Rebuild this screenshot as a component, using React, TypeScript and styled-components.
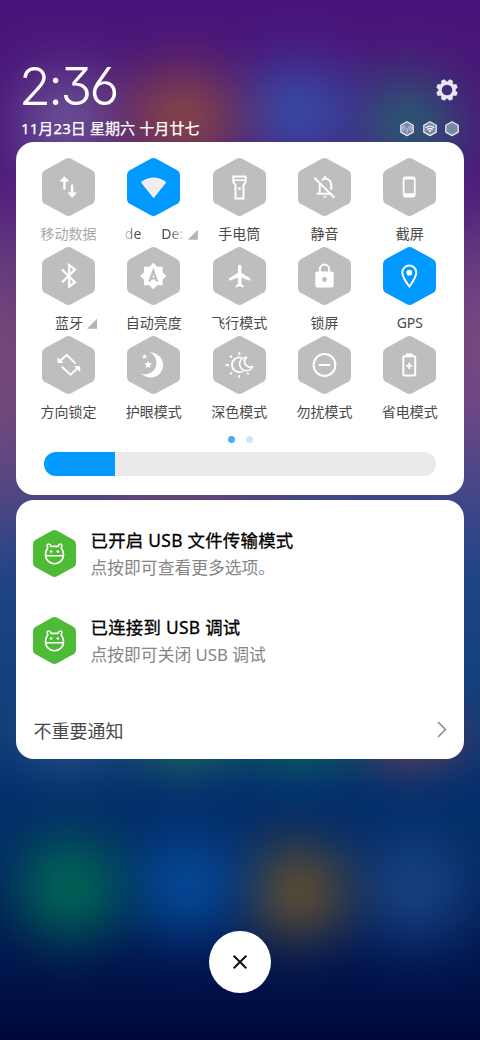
import React from 'react';
import styled, { createGlobalStyle, css } from 'styled-components';

const GlobalStyle = createGlobalStyle`
  * { box-sizing: border-box; }
  body {
    margin: 0;
    background: #000535;
    font-family: "Noto Sans", "Noto Sans CJK SC", sans-serif;
  }
`;

const glow = (shape: string, x: number, y: number, rgb: string, alpha: number) =>
  `radial-gradient(ellipse ${shape} at ${x}px ${y}px, ` +
  [[1, 0], [0.92, 15], [0.72, 30], [0.47, 45], [0.25, 60], [0.1, 75], [0.03, 88], [0, 100]]
    .map(([k, stop]) => `rgba(${rgb}, ${(alpha * k).toFixed(3)}) ${stop}%`)
    .join(', ') +
  ')';

const wallpaper = [
  glow('115px 105px', 182, 118, '138, 72, 66', 0.85),
  glow('120px 105px', 298, 112, '52, 78, 168', 0.85),
  glow('110px 105px', 408, 124, '40, 92, 112', 0.85),
  glow('110px 110px', 68, 122, '110, 86, 152', 0.8),
  glow('105px 105px', 70, 888, '0, 106, 84', 0.85),
  glow('115px 105px', 187, 886, '5, 76, 158', 0.8),
  glow('105px 100px', 298, 892, '92, 76, 50', 0.9),
  glow('115px 110px', 414, 888, '28, 70, 138', 0.75),
  glow('110px 85px', 68, 735, '40, 80, 130', 0.8),
  glow('110px 75px', 185, 738, '30, 96, 92', 0.9),
  glow('110px 75px', 300, 738, '8, 92, 92', 0.9),
  glow('110px 75px', 412, 738, '85, 60, 90', 0.9),
  glow('190px 70px', 175, 497, '112, 68, 112', 0.7),
  glow('90px 230px', 0, 370, '124, 74, 116', 0.8),
  glow('90px 190px', 480, 350, '126, 74, 126', 0.8),
  `linear-gradient(#49157a 0, #4a1678 90px, #4c187a 170px, #5a3280 270px, #54448a 400px, #424688 490px,
    #1f4485 580px, #14407e 680px, #04306e 780px, #022a62 860px, #011850 950px, #00083c 1040px)`,
].join(', ');

const Screen = styled.main`
  display: flex;
  flex-direction: column;
  width: 480px;
  height: 1040px;
  padding: 0 16px;
  overflow: hidden;
  background: ${wallpaper};
`;

const Header = styled.header`
  display: flex;
  justify-content: space-between;
  height: 142px;
  padding: 62px 4px 0 5px;
  color: #fff;
`;

const HeaderColumn = styled.div<{ $end?: boolean }>`
  display: flex;
  flex-direction: column;
  align-items: ${p => (p.$end ? 'flex-end' : 'flex-start')};
  padding-top: ${p => (p.$end ? 17 : 0)}px;
`;

const Clock = styled.time`
  height: 47px;
  margin-left: -2px;
  padding-top: 1px;
  font: 300 52px/47px Inter, sans-serif;
  font-feature-settings: "cv09", "ss01", "cv03";
  letter-spacing: -2.6px;
`;

const DateLine = styled.div`
  margin-top: 8px;
  font-size: 15px;
  line-height: 22px;
  letter-spacing: 0.1px;
  white-space: nowrap;
  -webkit-text-stroke: 0.25px #fff;
`;

const StatusIcons = styled.div`
  display: flex;
  gap: 8.7px;
  margin: 19.5px 0.6px 0 0;
`;

const Card = styled.section<{ $height: number }>`
  flex: none;
  height: ${p => p.$height}px;
  margin-bottom: 5px;
  border-radius: 18px;
  background: #fff;
`;

const TileGrid = styled.div`
  display: grid;
  grid-template-columns: repeat(5, 85.35px);
  grid-auto-rows: 89px;
  padding: 15.7px 0 0 9.8px;
`;

const TileBox = styled.div`
  display: flex;
  flex-direction: column;
  align-items: center;
`;

const TileLabel = styled.div<{ $muted?: boolean; $more?: boolean }>`
  display: flex;
  align-items: center;
  gap: 4px;
  margin-top: 8.6px;
  height: 20px;
  font-size: 14px;
  line-height: 20px;
  white-space: nowrap;
  color: ${p => (p.$muted ? '#a9a9a9' : '#4a4a4a')};
  ${p => p.$more && css`padding-left: 15px;`}
`;

const Marquee = styled.span`
  display: flex;
  gap: 20px;
  width: 59px;
  overflow: hidden;
  mask-image: linear-gradient(90deg, rgba(0, 0, 0, 0.25), #000 12px, #000 44px, transparent 62px);
`;

const MoreMark = styled.i`
  width: 10px;
  height: 10px;
  margin-top: 1px;
  background: #b4b4b4;
  clip-path: polygon(100% 0, 100% 100%, 0 100%);
`;

const Pager = styled.div`
  display: flex;
  justify-content: center;
  gap: 11px;
  margin-top: 11px;
`;

const PageDot = styled.span<{ $active?: boolean }>`
  width: 7px;
  height: 7px;
  border-radius: 50%;
  background: ${p => (p.$active ? '#40b0fa' : '#c8e9fd')};
`;

const Slider = styled.div`
  height: 24px;
  margin: 9.3px 28px 0;
  border-radius: 12px;
  background: #eaeaea;
  overflow: hidden;
`;

const SliderFill = styled.div`
  width: 70.6px;
  height: 100%;
  background: #0099ff;
`;

const NotificationList = styled.div`
  display: flex;
  flex-direction: column;
  height: 205px;
  padding: 27px 17px 0;
`;

const Notification = styled.article`
  display: flex;
  gap: 14.5px;
  height: 87.2px;
  padding-top: 3px;
`;

const NotificationText = styled.div`
  display: flex;
  flex-direction: column;
  white-space: nowrap;
  margin-top: -3px;
`;

const Title = styled.strong`
  font-size: 17.4px;
  font-weight: 400;
  line-height: 27px;
  letter-spacing: 0.28px;
  color: #000;
  -webkit-text-stroke: 0.3px #000;
`;

const Subtitle = styled.span`
  font-size: 16.8px;
  line-height: 27px;
  color: #858585;
`;

const FooterRow = styled.div`
  display: flex;
  justify-content: space-between;
  align-items: center;
  height: 50px;
  padding: 0 17px 0 17.5px;
  font-size: 18px;
  color: #484848;
`;

const CloseButton = styled.button`
  display: grid;
  place-items: center;
  align-self: center;
  flex: none;
  width: 62px;
  height: 62px;
  margin-top: 167px;
  padding: 0;
  border: 0;
  border-radius: 50%;
  background: #fff;
`;

const Icon = styled.svg`
  display: block;
  flex: none;
  overflow: visible;
`;

const GearIcon = styled(Icon)`
  margin-right: 2.5px;
`;

const HEX =
  'M23.3 .9Q26.5 -.8 29.7 .9L49.8 11.9Q53 13.7 53 17.3V40.7Q53 44.3 49.8 46.1L29.7 57.1Q26.5 58.8 23.3 57.1L3.2 46.1Q0 44.3 0 40.7V17.3Q0 13.7 3.2 11.9Z';

const star = (cx: number, cy: number, outer: number, inner: number, points: number) =>
  Array.from({ length: points * 2 }, (_, i) => {
    const r = i % 2 ? inner : outer;
    const a = (i * Math.PI) / points - Math.PI / 2;
    return `${(cx + r * Math.cos(a)).toFixed(2)},${(cy + r * Math.sin(a)).toFixed(2)}`;
  }).join(' ');

const line = { fill: 'none', stroke: '#fff', strokeWidth: 2 } as const;

const glyphs: Record<string, React.ReactNode> = {
  data: (
    <>
      <path d="M22.4 21v10.4M30.1 26.4v10.6" {...line} strokeWidth={2.4} />
      <path d="M22.4 18.2l5 5.2h-10zM30.1 39.7l-5-5.2h10z" fill="#fff" />
    </>
  ),
  wifi: <path d="M14.6 23.6Q26.5 15.6 38.6 23.6Q39.3 24.2 38.8 24.9L27.2 39.4Q26.6 40.2 26 39.4L14.4 24.9Q13.9 24.2 14.6 23.6Z" fill="#eee" />,
  torch: (
    <>
      <path d="M20.3 18.5h12.4v5.2l-2.2 3.6v13.2h-8V27.3l-2.2-3.6z" {...line} />
      <path d="M20.3 22.2h12.4" {...line} strokeWidth={1.6} />
      <circle cx="26.5" cy="30.5" r="1.5" fill="#fff" />
    </>
  ),
  mute: (
    <>
      <path d="M18.7 35.8h14.5M21.7 35.5v-9.8M23.8 22.2c1-.9 2.1-1.4 3.2-1.4c3.6 0 6.2 2.6 6.2 6.3v4.6" {...line} />
      <path d="M27 18.3v3" {...line} strokeWidth={2.6} />
      <path d="M25 38.2h4q-.5 1.6-2 1.6t-2-1.6z" fill="#fff" />
      <path d="M16.3 19.8l20.2 20" {...line} />
    </>
  ),
  phone: (
    <>
      <rect x="19.8" y="18.6" width="12.8" height="20.8" rx="2.4" fill="#fff" />
      <path d="M21.5 21.5h9.4v13.8h-9.4z" fill="#bebebe" />
    </>
  ),
  bluetooth: <path d="M20 22.5L33 35.2L27.2 39.6V18L33 22.6L20 35.4" {...line} strokeWidth={2.2} />,
  auto: (
    <>
      <polygon points={star(26.3, 29, 13.2, 10, 8)} fill="#fff" />
      <path d="M22.5 34.6l3.8-10.4l3.8 10.4M23.9 31.4h4.800" fill="none" stroke="#bebebe" strokeWidth="2.300" />
    </>
  ),
  plane: (
    <path transform="translate(12.8 15.6) scale(1.13)" d="M21.8 16v-2l-8-5V3.5c0-.83-.67-1.5-1.5-1.5s-1.5.67-1.5 1.5V9l-8 5v2l8-2.5V19l-2 1.5V22l3.5-1 3.5 1v-1.5l-2-1.5v-5.5z" fill="#fff" />
  ),
  lock: (
    <>
      <path d="M21.9 25v-2.8a4.6 4.6 0 0 1 9.2 0v2.8" {...line} />
      <rect x="17.3" y="24.4" width="18.4" height="16" rx="1.8" fill="#fff" />
      <circle cx="26.5" cy="32.5" r="2.4" fill="#bebebe" />
    </>
  ),
  pin: (
    <>
      <path d="M26.3 39.5C22.3 34.3 19.3 29.6 19.3 25.6a7 7 0 0 1 14 0C33.3 29.6 30.3 34.3 26.3 39.5Z" {...line} />
      <circle cx="26.3" cy="25.7" r="2.9" fill="#fff" />
    </>
  ),
  rotate: (
    <>
      <path d="M18 25L24.7 18.9L33.6 27.6M19.8 30.8L28.5 38.7L36 31.8" {...line} />
      <path d="M15.6 21.2v5.9h6zM38.200 36v-6h-6.200z" fill="#fff" />
    </>
  ),
  night: (
    <>
      <path d="M22.5 16.6A12.5 12.5 0 1 1 14.2 37.3A11 11 0 1 0 22.5 16.6Z" fill="#fff" />
      <polygon points={star(21.2, 28.8, 4, 1.9, 5)} fill="#fff" />
      <polygon points={star(17.6, 20.5, 2.8, 1.3, 5)} fill="#fff" />
    </>
  ),
  dark: (
    <>
      <path d="M28.6 21.9A7.3 7.3 0 1 0 29.8 35.2" {...line} strokeWidth={1.8} />
      <path d="M26.3 16v3M26.3 39v3M12.7 29h3.2M17 19.7l2 2M17 38.3l2-2M35.7 38.3l-1.5-1.5" {...line} strokeWidth={1.8} />
      <path d="M33.5 21.3A6.7 6.7 0 1 0 39.5 30.6A5.6 5.6 0 0 1 33.5 21.3Z" {...line} strokeWidth={1.7} strokeLinejoin="round" />
    </>
  ),
  dnd: (
    <>
      <circle cx="26.5" cy="29" r="10.9" {...line} />
      <path d="M20.8 29h11.4" {...line} />
    </>
  ),
  battery: (
    <>
      <rect x="20.3" y="20.2" width="11.9" height="19.3" rx="1" {...line} />
      <path d="M23 17.4h6.5v3h-6.5z" fill="#fff" />
      <path d="M26.25 26.7v6.2M23.15 29.8h6.2" {...line} strokeWidth={1.8} />
    </>
  ),
};

interface TileSpec {
  icon: string;
  label: string;
  active?: boolean;
  muted?: boolean;
  more?: boolean;
  scrolling?: string[];
}

const tiles: TileSpec[] = [
  { icon: 'data', label: '移动数据', muted: true },
  { icon: 'wifi', label: '', active: true, more: true, scrolling: ['de', 'De:'] },
  { icon: 'torch', label: '手电筒' },
  { icon: 'mute', label: '静音' },
  { icon: 'phone', label: '截屏' },
  { icon: 'bluetooth', label: '蓝牙', more: true },
  { icon: 'auto', label: '自动亮度' },
  { icon: 'plane', label: '飞行模式' },
  { icon: 'lock', label: '锁屏' },
  { icon: 'pin', label: 'GPS', active: true },
  { icon: 'rotate', label: '方向锁定' },
  { icon: 'night', label: '护眼模式' },
  { icon: 'dark', label: '深色模式' },
  { icon: 'dnd', label: '勿扰模式' },
  { icon: 'battery', label: '省电模式' },
];

const Tile = ({ icon, label, active, muted, more, scrolling }: TileSpec) => (
  <TileBox>
    <Icon width="53" height="58" viewBox="0 0 53 58">
      <path d={HEX} fill={active ? '#0099ff' : '#bebebe'} />
      {glyphs[icon]}
    </Icon>
    <TileLabel $muted={muted} $more={more}>
      {scrolling ? <Marquee>{scrolling.map(t => <span key={t}>{t}</span>)}</Marquee> : label}
      {more && <MoreMark />}
    </TileLabel>
  </TileBox>
);

const StatusHex = ({ children }: { children: React.ReactNode }) => (
  <Icon width="14" height="15.4" viewBox="0 0 14 15.4">
    <path d="M7 .8L13.2 4.2V11.2L7 14.6L.8 11.2V4.2Z" fill="#7d86ab" stroke="#e9e9f0" strokeWidth="1.3" strokeLinejoin="round" />
    {children}
  </Icon>
);

const DebugIcon = () => (
  <Icon width="43" height="47" viewBox="0 0 53 58">
    <path d={HEX} fill="#4dbb35" />
    <g fill="none" stroke="#fff" strokeWidth="2" strokeLinejoin="round" strokeLinecap="round">
      <path d="M18.300 21.800C16.800 19.800 17.200 17.200 19.200 17.200C21.200 17.200 21.700 18.600 22.200 20.200H30.800C31.300 18.600 31.800 17.200 33.800 17.200C35.800 17.200 36.200 19.800 34.700 21.800Q37.600 25.300 37.600 30.700A11.100 11 0 0 1 15.400 30.700Q15.400 25.300 18.300 21.800Z" />
      <path d="M15.600 31.800h21.800" />
    </g>
    <circle cx="22.300" cy="26.600" r="1.600" fill="#fff" />
    <circle cx="30.700" cy="26.600" r="1.600" fill="#fff" />
  </Icon>
);

const gearTeeth = Array.from({ length: 8 }, (_, i) => i * 45 + 22.5);

const notifications = [
  { title: '已开启 USB 文件传输模式', detail: '点按即可查看更多选项。' },
  { title: '已连接到 USB 调试', detail: '点按即可关闭 USB 调试' },
];

export default function App() {
  return (
    <>
      <GlobalStyle />
      <Screen>
        <Header>
          <HeaderColumn>
            <Clock>2:36</Clock>
            <DateLine>11月23日 星期六 十月廿七</DateLine>
          </HeaderColumn>
          <HeaderColumn $end>
            <GearIcon width="22" height="22" viewBox="-11 -11 22 22">
              <circle r="7" fill="none" stroke="#eae6f2" strokeWidth="3.4" />
              {gearTeeth.map(a => (
                <path key={a} d="M-2.7 -8L-1.9 -10.8H1.9L2.7 -8Z" fill="#eae6f2" transform={`rotate(${a})`} />
              ))}
            </GearIcon>
            <StatusIcons>
              <StatusHex>
                <path d="M7 7v5M5.3 8.7a2.3 2.3 0 0 1 0-3.2M8.7 8.7a2.3 2.3 0 0 0 0-3.2M3.7 10a4 4 0 0 1 0-5.5M10.3 10a4 4 0 0 0 0-5.5" fill="none" stroke="#dfe3ee" strokeWidth=".8" />
              </StatusHex>
              <StatusHex>
                <path d="M2.8 6.7Q7 3.3 11.2 6.7M4.3 8.5Q7 6.3 9.7 8.5" fill="none" stroke="#fff" strokeWidth="1.2" />
                <path d="M5.4 9.5Q7 8.3 8.6 9.5L7 11.3Z" fill="#fff" />
              </StatusHex>
              <StatusHex>
                <path d="M7.6 3.8L5 8h1.7L6.3 11.7L9 7.3H7.3Z" fill="#3d9f7c" />
              </StatusHex>
            </StatusIcons>
          </HeaderColumn>
        </Header>

        <Card $height={352.5}>
          <TileGrid>{tiles.map(t => <Tile key={t.icon} {...t} />)}</TileGrid>
          <Pager>
            <PageDot $active />
            <PageDot />
          </Pager>
          <Slider>
            <SliderFill />
          </Slider>
        </Card>

        <Card $height={259.5}>
          <NotificationList>
            {notifications.map(n => (
              <Notification key={n.title}>
                <DebugIcon />
                <NotificationText>
                  <Title>{n.title}</Title>
                  <Subtitle>{n.detail}</Subtitle>
                </NotificationText>
              </Notification>
            ))}
          </NotificationList>
          <FooterRow>
            <span>不重要通知</span>
            <Icon width="10" height="17" viewBox="0 0 10 17">
              <path d="M1 1L8.5 8.5L1 16" fill="none" stroke="#8c8c8c" strokeWidth="1.6" />
            </Icon>
          </FooterRow>
        </Card>

        <CloseButton aria-label="关闭">
          <Icon width="14" height="14" viewBox="0 0 14 14">
            <path d="M.7 .7L13.3 13.3M13.3 .7L.7 13.3" stroke="#111" strokeWidth="2" />
          </Icon>
        </CloseButton>
      </Screen>
    </>
  );
}
